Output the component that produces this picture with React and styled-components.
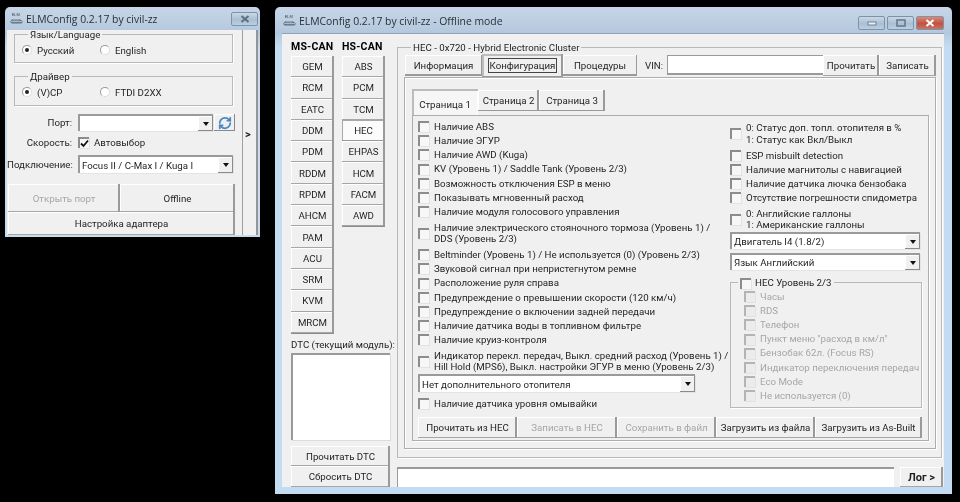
import styled, { createGlobalStyle } from "styled-components";
import { RefreshCw } from "lucide-react";

const GlobalStyle = createGlobalStyle`
  html, body { margin: 0; padding: 0; background: #000; }
  body { width: 960px; height: 502px; overflow: hidden; font-family: Roboto, "Liberation Sans", Arial, sans-serif; font-size: 9.7px; color: #1f1f1f; }
  * { box-sizing: border-box; }
`;

const Desktop = styled.div`
  position: relative;
  width: 960px;
  height: 502px;
  background: #000;
  filter: blur(0.3px);
`;

const Win = styled.div`
  position: absolute;
  left: ${(p) => p.$x}px;
  top: ${(p) => p.$y}px;
  width: ${(p) => p.$w}px;
  height: ${(p) => p.$h}px;
  display: flex;
  flex-direction: column;
  padding: 0 ${(p) => p.$pr}px ${(p) => p.$pb}px ${(p) => p.$pl}px;
  border-radius: 5px 5px 0 0;
  background: linear-gradient(180deg, #c6d6e7 0, #b4c8dd 26px, #c3dcf1 40px, #c3dcf1 100%);
`;

const TitleBar = styled.div`
  height: ${(p) => p.$h}px;
  flex: none;
  display: flex;
  align-items: center;
  gap: 2px;
  padding-left: ${(p) => p.$pad}px;
  padding-top: ${(p) => p.$pt || 0}px;
  font-family: "Open Sans", sans-serif;
  font-size: 10.4px;
  color: #2a3036;
`;

const TitleText = styled.span`
  flex: 1;
  white-space: nowrap;
`;

const Controls = styled.div`
  display: flex;
  gap: 2px;
  align-self: flex-start;
  margin-top: ${(p) => p.$top}px;
`;

const Ctl = styled.div`
  width: ${(p) => p.$w}px;
  height: 14px;
  display: flex;
  align-items: center;
  justify-content: center;
  border: 1px solid #7f93a8;
  border-radius: 2px;
  background: ${(p) =>
    p.$red
      ? "linear-gradient(180deg, #d98a7c, #c4503f 55%, #c77668)"
      : "linear-gradient(180deg, #c9d8e6, #a9bfd4 55%, #b9cfe3)"};
`;

const LeftClient = styled.div`
  flex: 1;
  display: flex;
  background: #f0f0f0;
  min-height: 0;
`;

const LeftMain = styled.div`
  width: 235px;
  display: flex;
  flex-direction: column;
`;

const Strip = styled.div`
  flex: 1;
  display: flex;
  align-items: center;
  padding: 4px 0 0 2px;
  border-left: 1px solid #a0a0a0;
  border-right: 2px solid #959595;
  font-weight: bold;
  font-size: 11px;
`;

const Group = styled.fieldset`
  margin: ${(p) => p.$mt || 0}px 0 0 ${(p) => p.$ml || 0}px;
  padding: ${(p) => p.$pad || "0"};
  width: ${(p) => p.$w}px;
  height: ${(p) => p.$h}px;
  min-width: 0;
  flex: none;
  border: 1px solid #b9b9b9;
  box-shadow: 1px 1px 0 #fff;
`;

const Legend = styled.legend`
  position: relative;
  top: 1px;
  margin-left: ${(p) => p.$ml || 6}px;
  padding: 0 2px;
  line-height: 8px;
  height: 8px;
  white-space: nowrap;
  display: flex;
  align-items: center;
  gap: 4px;
`;

const RadioRow = styled.div`
  display: flex;
  align-items: center;
  height: 14px;
`;

const RadioItem = styled.label`
  display: flex;
  align-items: center;
  gap: 5px;
  width: ${(p) => p.$w}px;
`;

const Radio = styled.span`
  width: 10px;
  height: 10px;
  flex: none;
  border-radius: 50%;
  background: #fff;
  border: 1px solid #9a9a9a;
  border-right-color: #ddd;
  border-bottom-color: #ddd;
  display: flex;
  align-items: center;
  justify-content: center;
  &::after {
    content: "";
    width: 4px;
    height: 4px;
    border-radius: 50%;
    background: ${(p) => (p.$on ? "#222" : "transparent")};
  }
`;

const FormRow = styled.div`
  display: flex;
  align-items: center;
  height: ${(p) => p.$h}px;
  margin-top: ${(p) => p.$mt || 0}px;
`;

const FormLabel = styled.span`
  width: 65px;
  margin-right: 6px;
  text-align: right;
  white-space: nowrap;
`;

const Combo = styled.div`
  width: ${(p) => p.$w}px;
  height: ${(p) => p.$h || 17}px;
  flex: none;
  display: flex;
  align-items: center;
  justify-content: space-between;
  margin-top: ${(p) => p.$mt || 0}px;
  padding-left: 2px;
  background: #fff;
  border-style: solid;
  border-width: 2px 0 0 2px;
  border-color: #9a9a9a;
  box-shadow: 1px 1px 0 #e4e4e4;
  white-space: nowrap;
`;

const ComboArrow = styled.span`
  width: 15px;
  align-self: stretch;
  flex: none;
  display: flex;
  align-items: center;
  justify-content: center;
  background: #f0f0f0;
  box-shadow: inset -1px -1px 0 #8a8a8a, inset 1px 1px 0 #fff;
  &::after {
    content: "";
    border: 3.5px solid transparent;
    border-top: 4px solid #111;
    border-bottom: 0;
  }
`;

const IconBtn = styled.button`
  width: 21px;
  height: 17px;
  margin-left: 1px;
  padding: 0;
  display: flex;
  align-items: center;
  justify-content: center;
  border: 0;
  background: #f0f0f0;
  box-shadow: inset -1px -1px 0 #8a8a8a, inset 1px 1px 0 #fff;
`;

const Check = styled.span`
  width: 11px;
  height: 11px;
  flex: none;
  background: ${(p) => (p.$off ? "#ececec" : "#f7f7f7")};
  border-style: solid;
  border-color: ${(p) => (p.$off ? "#b4b4b4" : "#8c8c8c")};
  border-width: 2px 0 0 2px;
  box-shadow: 1px 1px 0 #e2e2e2;
  display: flex;
  align-items: center;
  justify-content: center;
`;

const CheckLabel = styled.label`
  display: flex;
  align-items: center;
  gap: 5px;
`;

const Btn = styled.button`
  width: ${(p) => p.$w}px;
  height: ${(p) => p.$h}px;
  flex: none;
  padding: 0;
  border: 0;
  background: ${(p) => (p.$active ? "#fbfbfb" : "#f0f0f0")};
  font-family: inherit;
  font-size: ${(p) => p.$fs || 9.7}px;
  font-weight: ${(p) => (p.$bold ? "bold" : "normal")};
  color: ${(p) => (p.disabled ? "#a6a6a6" : "#1f1f1f")};
  white-space: nowrap;
  box-shadow: ${(p) =>
    p.$active
      ? "inset -2px -1px 0 #999, inset 1px 1px 0 #a8a8a8"
      : "inset -2px 0 0 #9a9a9a, inset 0 -1px 0 #a6a6a6, inset 1px 1px 0 #fff"};
`;

const BtnRow = styled.div`
  display: flex;
  margin-top: ${(p) => p.$mt || 0}px;
  margin-left: ${(p) => p.$ml || 0}px;
`;

const Client = styled.div`
  flex: 1;
  display: flex;
  background: #f0f0f0;
  border-top: 1px solid #8fa3b8;
  min-height: 0;
`;

const Side = styled.div`
  width: 115px;
  flex: none;
  display: flex;
  flex-direction: column;
  padding: 6px 0 0 9px;
`;

const BusHeads = styled.div`
  display: flex;
  gap: 8px;
  height: 12px;
  margin-bottom: 4px;
  font-weight: bold;
  font-size: 10.5px;
  letter-spacing: 0.2px;
  color: #000;
`;

const BusHead = styled.span`
  width: 43px;
  white-space: nowrap;
`;

const BusCols = styled.div`
  display: flex;
  gap: 8px;
  height: 277px;
`;

const BusCol = styled.div`
  width: 43px;
  display: flex;
  flex-direction: column;
  border-bottom: 1px solid #8c8c8c;
  height: fit-content;
`;

const DtcLabel = styled.div`
  margin-top: 6px;
  height: 12px;
  line-height: 12px;
  white-space: nowrap;
`;

const DtcBox = styled.div`
  width: 99px;
  height: 87px;
  margin-top: 2px;
  background: #fff;
  border-style: solid;
  border-width: 2px 0 0 2px;
  border-color: #9a9a9a;
  box-shadow: 1px 1px 0 #dcdcdc;
`;

const Main = styled.div`
  width: 546px;
  display: flex;
  flex-direction: column;
  padding-top: 9px;
`;

const TopRow = styled.div`
  display: flex;
  align-items: flex-start;
  height: 22px;
  margin-top: 4px;
`;

const TopTab = styled.div`
  width: ${(p) => p.$w}px;
  height: ${(p) => (p.$on ? 23 : 21)}px;
  margin-top: ${(p) => (p.$on ? -1 : 0)}px;
  display: flex;
  align-items: center;
  justify-content: center;
  white-space: nowrap;
  background: #f0f0f0;
  box-shadow: ${(p) =>
    p.$on
      ? "inset -2px -1px 0 #9a9a9a, inset 2px 2px 0 #bdbdbd"
      : "inset -1px -2px 0 #9a9a9a, inset 1px 1px 0 #fff"};
`;

const Focus = styled.span`
  padding: 1px 1px;
  border: 1px solid #444;
`;

const VinLabel = styled.span`
  margin-left: 8px;
  width: 22px;
  height: 21px;
  line-height: 21px;
`;

const VinInput = styled.input`
  width: 156px;
  height: 20px;
  padding: 0;
  background: #fff;
  border-style: solid;
  border-color: #9a9a9a;
  border-width: 1px 0 2px 1px;
  outline: none;
`;

const Page = styled.div`
  width: 532px;
  height: 372px;
  margin-left: -1px;
  padding: 11px 0 0 7px;
  border: 1px solid #adadad;
  box-shadow: inset 1px 1px 0 #fff, 1px 1px 0 #fff;
`;

const SubTabs = styled.div`
  display: flex;
  align-items: flex-end;
  height: 26px;
`;

const SubTab = styled.div`
  width: ${(p) => p.$w}px;
  height: ${(p) => (p.$on ? 26 : 21)}px;
  margin-bottom: ${(p) => (p.$on ? 0 : 4)}px;
  padding-top: ${(p) => (p.$on ? 4 : 0)}px;
  display: flex;
  align-items: center;
  justify-content: center;
  white-space: nowrap;
  background: ${(p) => (p.$on ? "#f6f6f6" : "#f0f0f0")};
  box-shadow: ${(p) =>
    p.$on
      ? "inset 2px 2px 0 #bcbcbc, inset -1px 0 0 #fff"
      : "inset -2px -1px 0 #9a9a9a, inset 1px 1px 0 #fff"};
`;

const Inner = styled.div`
  width: 517px;
  height: 326px;
  padding: 3.5px 0 0 5px;
  border: 1px solid #adadad;
  box-shadow: 1px 1px 0 #fff;
`;

const Cols = styled.div`
  display: flex;
`;

const ColLeft = styled.div`
  width: 312px;
  flex: none;
`;

const ColRight = styled.div`
  width: 192px;
  flex: none;
`;

const Row = styled.div`
  display: flex;
  align-items: center;
  gap: 5px;
  height: ${(p) => (p.$two ? 28.8 : 14.2)}px;
  color: ${(p) => (p.$off ? "#a6a6a6" : "#1f1f1f")};
  white-space: nowrap;
  line-height: 11.5px;
`;

const RowGap = styled.div`
  margin-top: ${(p) => p.$mt}px;
`;

const SubRows = styled.div`
  padding: 3px 0 0 13px;
`;

const LogRow = styled.div`
  display: flex;
  height: 20px;
  margin-top: 9px;
`;

const LogInput = styled.div`
  width: 497px;
  height: 20px;
  background: #fff;
  border-style: solid;
  border-color: #9a9a9a;
  border-width: 2px 0 0 1px;
`;

const Spacer = styled.div`
  width: 6px;
`;

const msCan = ["GEM", "RCM", "EATC", "DDM", "PDM", "RDDM", "RPDM", "AHCM", "PAM", "ACU", "SRM", "KVM", "MRCM"];
const hsCan = ["ABS", "PCM", "TCM", "HEC", "EHPAS", "HCM", "FACM", "AWD"];

const leftRows = [
  ["Наличие ABS"],
  ["Наличие ЭГУР"],
  ["Наличие AWD (Kuga)"],
  ["KV (Уровень 1) / Saddle Tank (Уровень 2/3)"],
  ["Возможность отключения ESP в меню"],
  ["Показывать мгновенный расход"],
  ["Наличие модуля голосового управления"],
  ["Наличие электрического стояночного тормоза (Уровень 1) /", "DDS (Уровень 2/3)"],
  ["Beltminder (Уровень 1) / Не используется (0) (Уровень 2/3)"],
  ["Звуковой сигнал при непристегнутом ремне"],
  ["Расположение руля справа"],
  ["Предупреждение о превышении скорости (120 км/ч)"],
  ["Предупреждение о включении задней передачи"],
  ["Наличие датчика воды в топливном фильтре"],
  ["Наличие круиз-контроля"],
  ["Индикатор перекл. передач, Выкл. средний расход (Уровень 1) /", "Hill Hold (MPS6), Выкл. настройки ЭГУР в меню  (Уровень 2/3)"],
];

const rightRows = [
  ["0: Статус доп. топл. отопителя в %", "1: Статус как Вкл/Выкл"],
  ["ESP misbuilt detection"],
  ["Наличие магнитолы с навигацией"],
  ["Наличие датчика лючка бензобака"],
  ["Отсутствие погрешности спидометра"],
  ["0: Английские галлоны", "1: Американские галлоны"],
];

const level2 = [
  "Часы",
  "RDS",
  "Телефон",
  'Пункт меню "расход в км/л"',
  "Бензобак 62л. (Focus RS)",
  "Индикатор переключения передач",
  "Eco Mode",
  "Не используется (0)",
];

const bottomButtons = [
  { text: "Прочитать из HEC", w: 99 },
  { text: "Записать в HEC", w: 100, disabled: true },
  { text: "Сохранить в файл", w: 99, disabled: true },
  { text: "Загрузить из файла", w: 99 },
  { text: "Загрузить из As-Built", w: 107 },
];

function CheckRow({ lines, off }) {
  return (
    <Row $two={lines.length > 1} $off={off}>
      <Check $off={off} />
      <span>
        {lines.map((line) => (
          <div key={line}>{line}</div>
        ))}
      </span>
    </Row>
  );
}

function AppIcon() {
  return (
    <svg width="15" height="16" viewBox="0 0 17 16">
      <text x="3" y="5" fontSize="4.5" fontFamily="Liberation Sans" fill="#444">ELM</text>
      <path d="M1 11 L4 8 H12 L16 11 L14 13 H3 Z" fill="#5c6f80" />
      <path d="M4 9 H12 M2 11 H15" stroke="#e6edf3" strokeWidth="0.8" />
    </svg>
  );
}

function CloseGlyph({ color }) {
  return (
    <svg width="10" height="8" viewBox="0 0 10 8">
      <path d="M1.5 1 L8.5 7 M8.5 1 L1.5 7" stroke={color} strokeWidth="2" />
    </svg>
  );
}

function LoaderWindow() {
  return (
    <Win $x={5} $y={7} $w={255} $h={230} $pl={2} $pr={2} $pb={2}>
      <TitleBar $h={23} $pad={2}>
        <AppIcon />
        <TitleText>ELMConfig 0.2.17 by civil-zz</TitleText>
        <Controls $top={5}>
          <Ctl $w={27}>
            <CloseGlyph color="#5f6f80" />
          </Ctl>
        </Controls>
      </TitleBar>
      <LeftClient>
        <LeftMain>
          <Group $ml={7} $w={219} $h={33} $pad="5px 0 0 7px">
            <Legend>Язык/Language</Legend>
            <RadioRow>
              <RadioItem $w={78}>
                <Radio $on />
                Русский
              </RadioItem>
              <RadioItem>
                <Radio />
                English
              </RadioItem>
            </RadioRow>
          </Group>
          <Group $ml={7} $mt={9} $w={219} $h={34} $pad="5px 0 0 7px">
            <Legend>Драйвер</Legend>
            <RadioRow>
              <RadioItem $w={78}>
                <Radio $on />
                (V)CP
              </RadioItem>
              <RadioItem>
                <Radio />
                FTDI D2XX
              </RadioItem>
            </RadioRow>
          </Group>
          <FormRow $h={17} $mt={8}>
            <FormLabel>Порт:</FormLabel>
            <Combo $w={135}>
              <span />
              <ComboArrow />
            </Combo>
            <IconBtn>
              <RefreshCw size={14} strokeWidth={3} color="#4a86c5" />
            </IconBtn>
          </FormRow>
          <FormRow $h={14} $mt={5}>
            <FormLabel>Скорость:</FormLabel>
            <CheckLabel>
              <Check>
                <svg width="9" height="9" viewBox="0 0 9 9">
                  <path d="M1 4.5 L3.5 7 L8 1.5" stroke="#111" strokeWidth="1.8" fill="none" />
                </svg>
              </Check>
              Автовыбор
            </CheckLabel>
          </FormRow>
          <FormRow $h={18} $mt={6}>
            <FormLabel>Подключение:</FormLabel>
            <Combo $w={155} $h={18}>
              Focus II / C-Max I / Kuga I
              <ComboArrow />
            </Combo>
          </FormRow>
          <BtnRow $mt={11} $ml={1}>
            <Btn $w={112} $h={28} disabled>Открыть порт</Btn>
            <Btn $w={115} $h={28}>Offline</Btn>
          </BtnRow>
          <BtnRow $ml={1}>
            <Btn $w={227} $h={23}>Настройка адаптера</Btn>
          </BtnRow>
        </LeftMain>
        <Strip>&gt;</Strip>
      </LeftClient>
    </Win>
  );
}

function MainWindow() {
  return (
    <Win $x={275} $y={7} $w={677} $h={487} $pl={7} $pr={8} $pb={7}>
      <TitleBar $h={26} $pad={0} $pt={1}>
        <AppIcon />
        <TitleText>ELMConfig 0.2.17 by civil-zz - Offline mode</TitleText>
        <Controls $top={8}>
          <Ctl $w={27}>
            <svg width="10" height="6" viewBox="0 0 10 6">
              <rect x="1" y="2" width="8" height="3" fill="#e8eef4" stroke="#5f6f80" strokeWidth="0.8" />
            </svg>
          </Ctl>
          <Ctl $w={27}>
            <svg width="10" height="8" viewBox="0 0 10 8">
              <rect x="1" y="1" width="8" height="6" fill="none" stroke="#5f6f80" strokeWidth="1.4" />
            </svg>
          </Ctl>
          <Ctl $w={28} $red>
            <CloseGlyph color="#fff" />
          </Ctl>
        </Controls>
      </TitleBar>
      <Client>
        <Side>
          <BusHeads>
            <BusHead>MS-CAN</BusHead>
            <BusHead>HS-CAN</BusHead>
          </BusHeads>
          <BusCols>
            <BusCol>
              {msCan.map((m) => (
                <Btn key={m} $w={43} $h={21.3}>{m}</Btn>
              ))}
            </BusCol>
            <BusCol>
              {hsCan.map((m) => (
                <Btn key={m} $w={43} $h={21.3} $active={m === "HEC"}>{m}</Btn>
              ))}
            </BusCol>
          </BusCols>
          <DtcLabel>DTC (текущий модуль):</DtcLabel>
          <DtcBox />
          <BtnRow $mt={6}>
            <Btn $w={99} $h={20}>Прочитать DTC</Btn>
          </BtnRow>
          <BtnRow>
            <Btn $w={99} $h={21}>Сбросить DTC</Btn>
          </BtnRow>
        </Side>
        <Main>
          <Group $w={545} $h={415} $pad="0 0 0 7px">
            <Legend>HEC - 0x720 - Hybrid Electronic Cluster</Legend>
            <TopRow>
              <TopTab $w={77}>Информация</TopTab>
              <TopTab $w={81} $on><Focus>Конфигурация</Focus></TopTab>
              <TopTab $w={74}>Процедуры</TopTab>
              <VinLabel>VIN:</VinLabel>
              <VinInput />
              <Btn $w={56} $h={21}>Прочитать</Btn>
              <Btn $w={57} $h={21}>Записать</Btn>
            </TopRow>
            <Page>
              <SubTabs>
                <SubTab $w={66} $on>Страница 1</SubTab>
                <SubTab $w={61}>Страница 2</SubTab>
                <SubTab $w={66}>Страница 3</SubTab>
              </SubTabs>
              <Inner>
                <Cols>
                  <ColLeft>
                    {leftRows.map((lines) => (
                      <CheckRow key={lines[0]} lines={lines} />
                    ))}
                    <Combo $w={277} $h={18} $mt={-1.5}>
                      Нет дополнительного отопителя
                      <ComboArrow />
                    </Combo>
                    <RowGap $mt={4}>
                      <CheckRow lines={["Наличие датчика уровня омывайки"]} />
                    </RowGap>
                  </ColLeft>
                  <ColRight>
                    {rightRows.map((lines) => (
                      <CheckRow key={lines[0]} lines={lines} />
                    ))}
                    <Combo $w={190} $h={17} $mt={-1.5}>
                      Двигатель I4 (1.8/2)
                      <ComboArrow />
                    </Combo>
                    <RowGap $mt={4}>
                      <Combo $w={190} $h={17}>
                        Язык Английский
                        <ComboArrow />
                      </Combo>
                    </RowGap>
                    <Group $mt={8} $w={192} $h={130}>
                      <Legend $ml={7}>
                        <Check />
                        HEC Уровень 2/3
                      </Legend>
                      <SubRows>
                        {level2.map((t) => (
                          <CheckRow key={t} lines={[t]} off />
                        ))}
                      </SubRows>
                    </Group>
                  </ColRight>
                </Cols>
                <BtnRow $mt={7}>
                  {bottomButtons.map((b) => (
                    <Btn key={b.text} $w={b.w} $h={21} disabled={b.disabled}>{b.text}</Btn>
                  ))}
                </BtnRow>
              </Inner>
            </Page>
          </Group>
          <LogRow>
            <LogInput />
            <Spacer />
            <Btn $w={43} $h={20} $bold $fs={11}>Лог &gt;</Btn>
          </LogRow>
        </Main>
      </Client>
    </Win>
  );
}

export default function App() {
  return (
    <Desktop>
      <GlobalStyle />
      <LoaderWindow />
      <MainWindow />
    </Desktop>
  );
}
